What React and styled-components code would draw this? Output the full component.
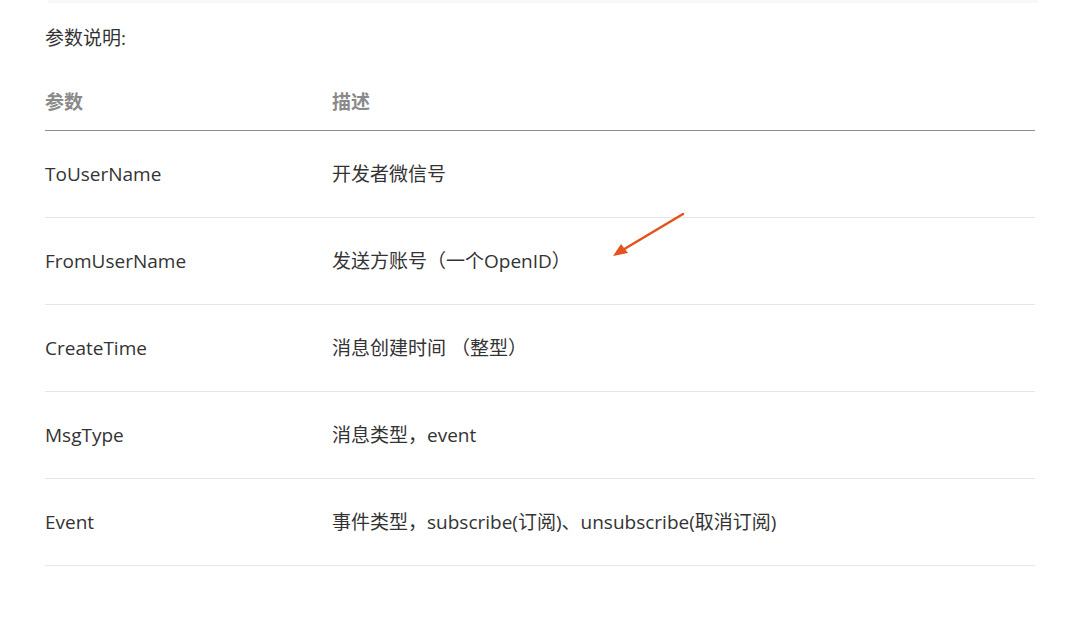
import React from 'react'
import styled, { createGlobalStyle } from 'styled-components'

const rows = [
  ['ToUserName', '开发者微信号'],
  ['FromUserName', '发送方账号（一个OpenID）'],
  ['CreateTime', '消息创建时间 （整型）'],
  ['MsgType', '消息类型，event'],
  ['Event', '事件类型，subscribe(订阅)、unsubscribe(取消订阅)'],
]

export default function App() {
  return (
    <Page>
      <GlobalStyle />
      <TopBar />
      <Title>参数说明:</Title>
      <Table>
        <thead>
          <tr>
            <Th>参数</Th>
            <Th>描述</Th>
          </tr>
        </thead>
        <tbody>
          {rows.map(([name, desc]) => (
            <tr key={name}>
              <Td>{name}</Td>
              <Td>{desc}</Td>
            </tr>
          ))}
        </tbody>
      </Table>
      <Arrow width="80" height="50" viewBox="0 0 80 50">
        <line x1="74" y1="3" x2="12" y2="40" stroke="#e4531d" strokeWidth="2.6" strokeLinecap="round" />
        <polygon points="4,45 12,33 19,42" fill="#e4531d" />
      </Arrow>
    </Page>
  )
}

const GlobalStyle = createGlobalStyle`
  body {
    margin: 0;
    background: #fff;
    font-family: "Open Sans", "Noto Sans CJK SC", sans-serif;
    color: #333;
  }
`

const Page = styled.div`
  position: relative;
  width: 1072px;
  height: 618px;
  overflow: hidden;
`

const TopBar = styled.div`
  margin-left: 48px;
  width: 990px;
  height: 3px;
  background: #f7f7f7;
`

const Title = styled.div`
  margin: 24px 0 0 45px;
  font-size: 19px;
  line-height: 22px;
  color: #333;
`

const Table = styled.table`
  margin: 28px 0 0 45px;
  width: 990px;
  border-collapse: collapse;
  font-size: 19px;
`

const Th = styled.th`
  text-align: left;
  font-weight: bold;
  color: #8a8a8a;
  height: 53px;
  padding: 0 0 17px;
  box-sizing: border-box;
  vertical-align: bottom;
  line-height: 22px;
  border-bottom: 1px solid #8c8c8c;
  &:first-child {
    width: 287px;
  }
`

const Td = styled.td`
  padding: 0;
  height: 86px;
  line-height: 22px;
  color: #333;
  border-bottom: 1px solid #e6e6e6;
`

const Arrow = styled.svg`
  position: absolute;
  left: 609px;
  top: 211px;
`
